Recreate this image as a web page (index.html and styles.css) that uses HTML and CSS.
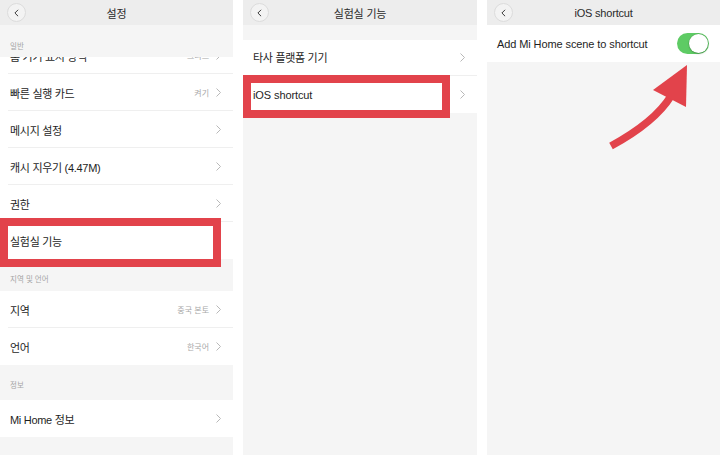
FILE: index.html
```html
<!DOCTYPE html>
<html lang="ko">
<head>
<meta charset="utf-8">
<title>Mi Home 설정</title>
<link rel="stylesheet" href="styles.css">
</head>
<body>
<div class="screens">
  <!-- Panel 1 -->
  <section class="panel">
    <header class="topbar">
      <span class="back"><svg viewBox="0 0 6 10" width="5" height="8"><polyline points="5,1 1,5 5,9" fill="none" stroke="#333" stroke-width="1.2"/></svg></span>
      <h1 class="title">설정</h1>
    </header>
    <div class="scroller">
      <div class="group-label on-top">일반</div>
      <div class="row partial">
        <span class="label">홈 기기 표시 방식</span>
        <span class="value">그리드</span>
        <svg class="chev" viewBox="0 0 5 9" width="5" height="9"><polyline points="0.5,0.5 4.5,4.5 0.5,8.5" fill="none" stroke="#b8b8b8" stroke-width="1"/></svg>
      </div>
      <div class="row">
        <span class="label">빠른 실행 카드</span>
        <span class="value">켜기</span>
        <svg class="chev" viewBox="0 0 5 9" width="5" height="9"><polyline points="0.5,0.5 4.5,4.5 0.5,8.5" fill="none" stroke="#b8b8b8" stroke-width="1"/></svg>
      </div>
      <div class="row">
        <span class="label">메시지 설정</span>
        <svg class="chev" viewBox="0 0 5 9" width="5" height="9"><polyline points="0.5,0.5 4.5,4.5 0.5,8.5" fill="none" stroke="#b8b8b8" stroke-width="1"/></svg>
      </div>
      <div class="row">
        <span class="label">캐시 지우기 (4.47M)</span>
        <svg class="chev" viewBox="0 0 5 9" width="5" height="9"><polyline points="0.5,0.5 4.5,4.5 0.5,8.5" fill="none" stroke="#b8b8b8" stroke-width="1"/></svg>
      </div>
      <div class="row">
        <span class="label">권한</span>
        <svg class="chev" viewBox="0 0 5 9" width="5" height="9"><polyline points="0.5,0.5 4.5,4.5 0.5,8.5" fill="none" stroke="#b8b8b8" stroke-width="1"/></svg>
      </div>
      <div class="row last">
        <span class="label">실험실 기능</span>
      </div>
      <div class="group-label">지역 및 언어</div>
      <div class="row">
        <span class="label">지역</span>
        <span class="value">중국 본토</span>
        <svg class="chev" viewBox="0 0 5 9" width="5" height="9"><polyline points="0.5,0.5 4.5,4.5 0.5,8.5" fill="none" stroke="#b8b8b8" stroke-width="1"/></svg>
      </div>
      <div class="row last">
        <span class="label">언어</span>
        <span class="value">한국어</span>
        <svg class="chev" viewBox="0 0 5 9" width="5" height="9"><polyline points="0.5,0.5 4.5,4.5 0.5,8.5" fill="none" stroke="#b8b8b8" stroke-width="1"/></svg>
      </div>
      <div class="group-label tall">정보</div>
      <div class="row last">
        <span class="label">Mi Home 정보</span>
        <svg class="chev" viewBox="0 0 5 9" width="5" height="9"><polyline points="0.5,0.5 4.5,4.5 0.5,8.5" fill="none" stroke="#b8b8b8" stroke-width="1"/></svg>
      </div>
    </div>
    <div class="highlight hl-lab"></div>
  </section>

  <!-- Panel 2 -->
  <section class="panel">
    <header class="topbar">
      <span class="back"><svg viewBox="0 0 6 10" width="5" height="8"><polyline points="5,1 1,5 5,9" fill="none" stroke="#333" stroke-width="1.2"/></svg></span>
      <h1 class="title">실험실 기능</h1>
    </header>
    <div class="spacer"></div>
    <div class="row short">
      <span class="label">타사 플랫폼 기기</span>
      <svg class="chev" viewBox="0 0 5 9" width="5" height="9"><polyline points="0.5,0.5 4.5,4.5 0.5,8.5" fill="none" stroke="#b8b8b8" stroke-width="1"/></svg>
    </div>
    <div class="row last">
      <span class="label latin">iOS shortcut</span>
      <svg class="chev" viewBox="0 0 5 9" width="5" height="9"><polyline points="0.5,0.5 4.5,4.5 0.5,8.5" fill="none" stroke="#b8b8b8" stroke-width="1"/></svg>
    </div>
    <div class="highlight hl-ios"></div>
  </section>

  <!-- Panel 3 -->
  <section class="panel">
    <header class="topbar">
      <span class="back"><svg viewBox="0 0 6 10" width="5" height="8"><polyline points="5,1 1,5 5,9" fill="none" stroke="#333" stroke-width="1.2"/></svg></span>
      <h1 class="title">iOS shortcut</h1>
    </header>
    <div class="row last">
      <span class="label latin">Add Mi Home scene to shortcut</span>
      <span class="toggle"><span class="knob"></span></span>
    </div>
    <svg class="arrow" viewBox="0 0 233 455" width="233" height="455">
      <path d="M124,146 Q168,122 184,96" fill="none" stroke="#e2434b" stroke-width="7.5"/>
      <polygon points="200,65 166,90 199,107" fill="#e2434b"/>
    </svg>
  </section>
</div>
</body>
</html>
```

FILE: styles.css
```css
* { box-sizing: border-box; }
html, body {
  margin: 0;
  padding: 0;
  background: #ffffff;
}
body {
  font-family: "Liberation Sans", "Noto Sans CJK KR", Arial, sans-serif;
  color: #1e1e1e;
  width: 720px;
  height: 455px;
  overflow: hidden;
}
.screens {
  display: flex;
  gap: 10px;
  height: 455px;
}
.panel {
  position: relative;
  width: 233px;
  flex: none;
  height: 455px;
  background: #f5f5f5;
  overflow: hidden;
}
.panel:nth-child(2) { width: 234px; }

.topbar {
  position: relative;
  height: 25px;
  background: #ededed;
  display: flex;
  align-items: center;
  justify-content: center;
  z-index: 3;
}
.back {
  position: absolute;
  left: 7px;
  top: 3px;
  width: 19px;
  height: 19px;
  border-radius: 50%;
  border: 1px solid #dcdcdc;
  background: #f3f3f3;
  display: flex;
  align-items: center;
  justify-content: center;
}
.back svg { margin-left: -1px; }
.title {
  margin: 0;
  font-size: 11px;
  font-weight: normal;
  color: #2a2a2a;
  letter-spacing: -0.2px;
}

.scroller { display: flex; flex-direction: column; }

.group-label {
  height: 32px;
  padding: 14px 0 0 10px;
  font-size: 7.5px;
  color: #a5a5a5;
  background: #f5f5f5;
}
.group-label.tall { height: 35px; padding-top: 14px; }
.group-label.on-top {
  position: relative;
  z-index: 2;
  padding-top: 15px;
}

.row {
  height: 37px;
  background: #ffffff;
  display: flex;
  align-items: center;
  padding: 0 12px 0 10px;
  position: relative;
}
.row.short { height: 36px; padding-bottom: 2px; }
.row::after {
  content: "";
  position: absolute;
  left: 8px;
  right: 0;
  bottom: 0;
  height: 1px;
  background: #efefef;
}
.row.last::after { display: none; }
.row.partial { margin-top: -20px; }

.label {
  flex: 1;
  font-size: 11px;
  letter-spacing: -0.3px;
  color: #1e1e1e;
}
.label.latin { letter-spacing: -0.1px; }
.value {
  font-size: 8px;
  color: #a8a8a8;
  margin-right: 7px;
}
.chev { flex: none; }

.spacer { height: 15px; }

.highlight {
  position: absolute;
  border: 8px solid #e2434b;
  z-index: 4;
}
.hl-lab { left: 0; top: 218px; width: 221px; height: 49px; }
.hl-ios { left: 0; top: 75px; width: 207px; height: 43px; }

.toggle {
  width: 32px;
  height: 21px;
  border-radius: 11px;
  background: #5ecb64;
  position: relative;
  flex: none;
  margin-right: -1px;
}
.knob {
  position: absolute;
  right: 1px;
  top: 1px;
  width: 19px;
  height: 19px;
  border-radius: 50%;
  background: #ffffff;
  box-shadow: 0 0 0 0.5px rgba(0,0,0,0.15), 0 1px 2px rgba(0,0,0,0.2);
}

.arrow {
  position: absolute;
  left: 0;
  top: 0;
  pointer-events: none;
  z-index: 5;
}
```
